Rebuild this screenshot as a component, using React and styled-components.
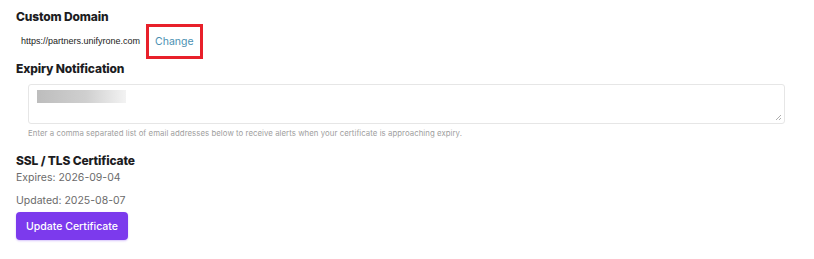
import React from 'react';
import styled, { createGlobalStyle } from 'styled-components';

const GlobalStyle = createGlobalStyle`
  html, body {
    margin: 0;
    padding: 0;
    background: #fff;
  }
  body {
    font-family: 'Inter', 'Liberation Sans', sans-serif;
  }
`;

const Page = styled.div`
  width: 814px;
  height: 259px;
  box-sizing: border-box;
  padding: 9px 16px 0 16px;
  display: flex;
  flex-direction: column;
`;

const Heading = styled.h3`
  margin: 0;
  font-size: 12px;
  font-weight: 800;
  color: #1d1d1f;
  line-height: 16px;
  letter-spacing: -0.15px;
`;

const DomainRow = styled.div`
  display: flex;
  align-items: center;
  height: 36px;
  margin-top: -2px;
  padding-left: 5px;
`;

const DomainText = styled.span`
  font-family: 'Liberation Sans', Arial, sans-serif;
  font-size: 9px;
  color: #222;
  width: 125px;
`;

const Highlight = styled.div`
  box-sizing: border-box;
  width: 57px;
  height: 35px;
  border: 3px solid #e8202a;
  display: flex;
  align-items: center;
  padding-left: 6px;
`;

const LinkButton = styled.span`
  font-size: 10.5px;
  color: #4a90b2;
`;

const Section = styled.div`
  display: flex;
  flex-direction: column;
  margin-top: ${p => p.$top || 0}px;
`;

const FieldWrap = styled.div`
  padding-left: 12px;
  margin-top: 7px;
  width: 757px;
`;

const TextArea = styled.div`
  box-sizing: border-box;
  height: 40px;
  border: 1px solid #e6e6e6;
  border-radius: 3px;
  position: relative;
  padding: 5px 8px;
`;

const Redacted = styled.div`
  width: 89px;
  height: 13px;
  background: linear-gradient(90deg, #bdbdbd 0%, #cfcfcf 55%, #f3f3f3 100%);
  filter: blur(0.4px);
`;

const Grip = styled.svg`
  position: absolute;
  right: 2px;
  bottom: 2px;
`;

const Hint = styled.p`
  margin: 4px 0 0;
  font-size: 7.8px;
  color: #a0a0a0;
  letter-spacing: 0.05px;
`;

const Meta = styled.p`
  margin: ${p => p.$top}px 0 0;
  font-size: 10.5px;
  color: #6b6b6b;
  line-height: 14px;
`;

const PrimaryButton = styled.button`
  margin-top: 4px;
  width: 112px;
  height: 28px;
  border: none;
  border-radius: 4px;
  background: #7c3aed;
  color: #fff;
  font-family: 'Inter', sans-serif;
  font-size: 10.5px;
  font-weight: 500;
  box-shadow: 0 1px 2px rgba(124, 58, 237, 0.3);
  padding: 0;
`;

export default function App() {
  return (
    <>
      <GlobalStyle />
      <Page>
        <Heading>Custom Domain</Heading>
        <DomainRow>
          <DomainText>https://partners.unifyrone.com</DomainText>
          <Highlight>
            <LinkButton>Change</LinkButton>
          </Highlight>
        </DomainRow>
        <Section $top={2}>
          <Heading>Expiry Notification</Heading>
          <FieldWrap>
            <TextArea>
              <Redacted />
              <Grip width="7" height="7" viewBox="0 0 7 7">
                <path d="M6 1L1 6M6 4L4 6" stroke="#999" strokeWidth="0.8" />
              </Grip>
            </TextArea>
            <Hint>
              Enter a comma separated list of email addresses below to receive alerts when your certificate is approaching expiry.
            </Hint>
          </FieldWrap>
        </Section>
        <Section $top={15}>
          <Heading>SSL / TLS Certificate</Heading>
          <Meta $top={2}>Expires: 2026-09-04</Meta>
          <Meta $top={9}>Updated: 2025-08-07</Meta>
          <div>
            <PrimaryButton>Update Certificate</PrimaryButton>
          </div>
        </Section>
      </Page>
    </>
  );
}
